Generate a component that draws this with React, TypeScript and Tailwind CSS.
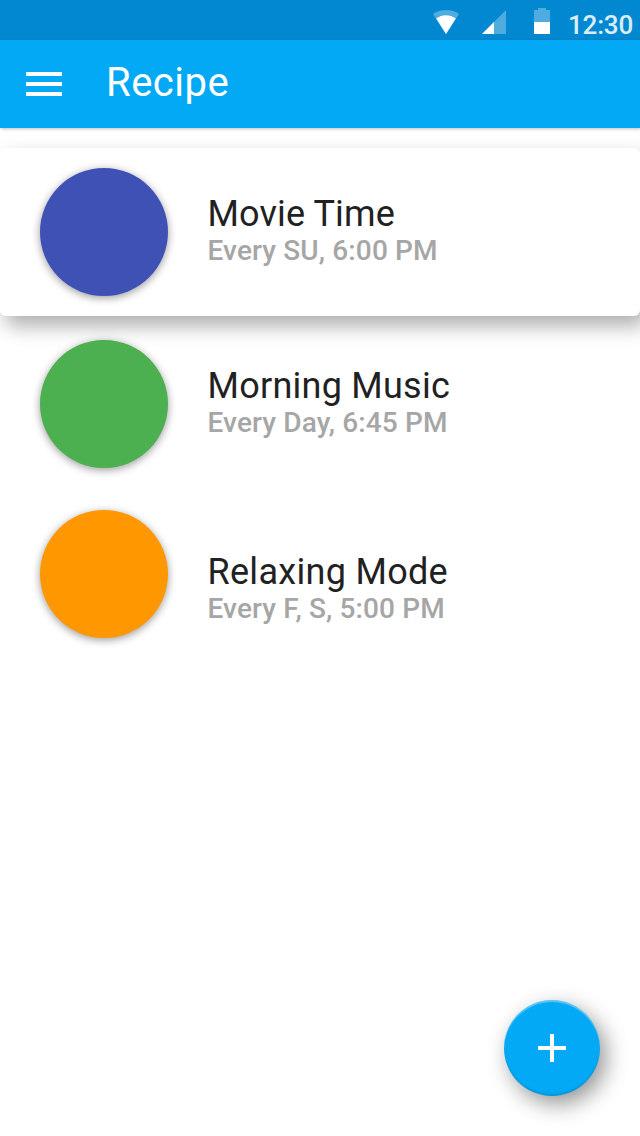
import React from 'react';

const recipes = [
  { name: 'Movie Time', time: 'Every SU, 6:00 PM', color: 'bg-[#3f51b5]', row: 'mt-5 h-[168px] rounded-md bg-white shadow-[6px_10px_20px_rgba(0,0,0,0.32)]', dot: 'mt-5', text: 'mt-[45px]', nameSpacing: 'tracking-[0.13px]' },
  { name: 'Morning Music', time: 'Every Day, 6:45 PM', color: 'bg-[#4caf50]', row: 'h-[172px]', dot: 'mt-6', text: 'mt-[49px]', nameSpacing: 'tracking-[0.25px]' },
  { name: 'Relaxing Mode', time: 'Every F, S, 5:00 PM', color: 'bg-[#ff9800]', row: 'h-[172px]', dot: 'mt-[22px]', text: 'mt-[63px]', nameSpacing: 'tracking-[0.3px]' },
];

const StatusBar = () => {
  return (
    <div className="h-10 bg-[#0288d1] flex items-start justify-end text-white">
      <svg className="mt-[10px] h-6 w-[26px]" viewBox="0 0 26 24" fill="currentColor">
        <path opacity=".3" d="M0 4C7-1.300 19-1.300 26 4L13 24z" />
        <path d="M3.200 8.600C9 4 17 4 22.800 8.600L13 24z" />
      </svg>
      <svg className="ml-[23px] mt-[10px] h-6 w-6" viewBox="0 0 24 24" fill="currentColor">
        <path opacity=".3" d="M24 0v24H0z" />
        <path d="M12 12v12H0z" />
      </svg>
      <svg className="ml-7 mt-2 h-[26px] w-4" viewBox="0 0 16 26" fill="currentColor">
        <path opacity=".3" d="M4 0h8v2h4v12H0V2h4z" />
        <path d="M0 14h16v12H0z" />
      </svg>
      <span className="ml-[18px] mr-[7px] mt-[7px] text-[26px] leading-[36px] tracking-[-0.2px] font-medium text-white/85">12:30</span>
    </div>
  );
};

const App = () => {
  return (
    <div className="relative h-[1136px] w-[640px] overflow-hidden bg-white font-[Roboto,sans-serif]">
      <StatusBar />
      <header className="h-[88px] bg-[#03a9f4] flex items-center pl-[26px] text-white shadow-[1px_1px_3px_rgba(0,0,0,0.25)]">
        <button type="button" aria-label="Menu" className="w-9 space-y-1.5">
          <span className="block h-1 bg-white"></span>
          <span className="block h-1 bg-white"></span>
          <span className="block h-1 bg-white"></span>
        </button>
        <h1 className="ml-[44px] -mt-0.5 text-[40px] leading-[48px] tracking-[0.5px]">Recipe</h1>
      </header>

      <main>
        {recipes.map((recipe) => (
          <div key={recipe.name} className={`flex pl-10 ${recipe.row}`}>
            <div className={`h-32 w-32 rounded-full shadow-[0_2px_8px_rgba(0,0,0,0.4)] ${recipe.color} ${recipe.dot}`}></div>
            <div className={`ml-[39.500px] ${recipe.text}`}>
              <h2 className={`text-[36px] leading-[42px] text-[#212121] ${recipe.nameSpacing}`}>{recipe.name}</h2>
              <p className="-mt-1 text-[28px] leading-[40px] tracking-[0.13px] font-medium text-[#a6a6a6]">{recipe.time}</p>
            </div>
          </div>
        ))}
      </main>

      <button
        type="button"
        aria-label="Add recipe"
        className="absolute bottom-10 right-10 flex h-24 w-24 items-center justify-center rounded-full bg-[#03a9f4] shadow-[inset_0_2px_1px_rgba(255,255,255,0.35),inset_0_-2px_2px_rgba(0,0,0,0.1),6px_8px_22px_rgba(0,0,0,0.42)]"
      >
        <svg className="h-7 w-7" viewBox="0 0 28 28" fill="white">
          <path d="M12 0h4v12h12v4H16v12h-4V16H0v-4h12z" />
        </svg>
      </button>
    </div>
  );
};

export default App;
